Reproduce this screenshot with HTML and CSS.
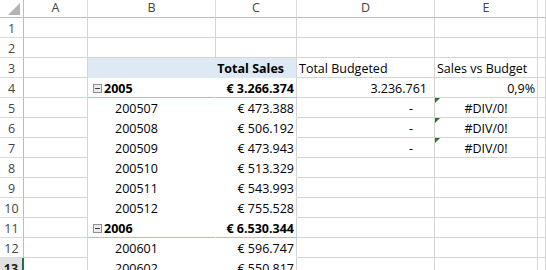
FILE: index.html
```html
<!DOCTYPE html>
<html>
<head>
<meta charset="utf-8">
<link rel="stylesheet" href="styles.css">
</head>
<body>
<div class="sheet">
  <!-- header row -->
  <div class="corner"><div class="tri"></div></div>
  <div class="ch">A</div>
  <div class="ch">B</div>
  <div class="ch">C</div>
  <div class="ch">D</div>
  <div class="ch">E</div>
  <div class="ch last"></div>

  <!-- row 1 -->
  <div class="rh">1</div><div class="c"></div><div class="c"></div><div class="c"></div><div class="c"></div><div class="c"></div><div class="c"></div>
  <!-- row 2 -->
  <div class="rh">2</div><div class="c"></div><div class="c"></div><div class="c"></div><div class="c"></div><div class="c"></div><div class="c"></div>
  <!-- row 3 -->
  <div class="rh">3</div><div class="c"></div>
  <div class="c pb phead"></div>
  <div class="c pc phead bold r hdr">Total Sales</div>
  <div class="c l">Total Budgeted</div>
  <div class="c l">Sales vs Budget</div>
  <div class="c"></div>
  <!-- row 4 -->
  <div class="rh">4</div><div class="c"></div>
  <div class="c pb year bold"><svg class="minus" width="9" height="9" viewBox="0 0 9 9"><rect x="0.5" y="0.5" width="8" height="8" fill="#ececec" stroke="#8e8e8e"/><line x1="2" y1="4.5" x2="7" y2="4.5" stroke="#3c3c3c"/></svg>2005</div>
  <div class="c pc year bold r">€ 3.266.374</div>
  <div class="c r num">3.236.761</div>
  <div class="c r">0,9%</div>
  <div class="c"></div>
  <!-- row 5 -->
  <div class="rh">5</div><div class="c"></div>
  <div class="c pb m">200507</div>
  <div class="c pc r">€ 473.388</div>
  <div class="c r dash">-</div>
  <div class="c ctr err"><span class="flag"></span>#DIV/0!</div>
  <div class="c"></div>
  <!-- row 6 -->
  <div class="rh">6</div><div class="c"></div>
  <div class="c pb m">200508</div>
  <div class="c pc r">€ 506.192</div>
  <div class="c r dash">-</div>
  <div class="c ctr err"><span class="flag"></span>#DIV/0!</div>
  <div class="c"></div>
  <!-- row 7 -->
  <div class="rh">7</div><div class="c"></div>
  <div class="c pb m">200509</div>
  <div class="c pc r">€ 473.943</div>
  <div class="c r dash">-</div>
  <div class="c ctr err"><span class="flag"></span>#DIV/0!</div>
  <div class="c"></div>
  <!-- row 8 -->
  <div class="rh">8</div><div class="c"></div>
  <div class="c pb m">200510</div>
  <div class="c pc r">€ 513.329</div>
  <div class="c"></div><div class="c"></div><div class="c"></div>
  <!-- row 9 -->
  <div class="rh">9</div><div class="c"></div>
  <div class="c pb m">200511</div>
  <div class="c pc r">€ 543.993</div>
  <div class="c"></div><div class="c"></div><div class="c"></div>
  <!-- row 10 -->
  <div class="rh">10</div><div class="c"></div>
  <div class="c pb m">200512</div>
  <div class="c pc r">€ 755.528</div>
  <div class="c"></div><div class="c"></div><div class="c"></div>
  <!-- row 11 -->
  <div class="rh">11</div><div class="c"></div>
  <div class="c pb year bold"><svg class="minus" width="9" height="9" viewBox="0 0 9 9"><rect x="0.5" y="0.5" width="8" height="8" fill="#ececec" stroke="#8e8e8e"/><line x1="2" y1="4.5" x2="7" y2="4.5" stroke="#3c3c3c"/></svg>2006</div>
  <div class="c pc year bold r">€ 6.530.344</div>
  <div class="c"></div><div class="c"></div><div class="c"></div>
  <!-- row 12 -->
  <div class="rh">12</div><div class="c"></div>
  <div class="c pb m">200601</div>
  <div class="c pc r">€ 596.747</div>
  <div class="c"></div><div class="c"></div><div class="c"></div>
  <!-- row 13 -->
  <div class="rh sel">13</div><div class="c"></div>
  <div class="c pb m">200602</div>
  <div class="c pc r">€ 550.817</div>
  <div class="c"></div><div class="c"></div><div class="c"></div>
</div>
</body>
</html>
```

FILE: styles.css
```css
html, body {
  margin: 0;
  padding: 0;
  background: #ffffff;
  overflow: hidden;
}

.sheet {
  display: grid;
  grid-template-columns: 24px 64px 128px 81px 138px 103px 8px;
  grid-template-rows: 18px repeat(13, 20px);
  width: 546px;
  height: 270px;
  overflow: hidden;
  font-family: "Open Sans", "Liberation Sans", sans-serif;
  font-size: 12.5px;
  color: #000;
}

.sheet > div {
  box-sizing: border-box;
  border-right: 1px solid #d4d4d4;
  border-bottom: 1px solid #d4d4d4;
  white-space: nowrap;
  overflow: hidden;
}

/* column headers */
.corner {
  display: flex;
  justify-content: flex-end;
  align-items: flex-end;
  padding: 0 3px 2px 0;
  border-right-color: #bdbdbd !important;
  border-bottom-color: #bdbdbd !important;
}
.tri {
  width: 0;
  height: 0;
  border-left: 12px solid transparent;
  border-bottom: 12px solid #b4b4b4;
}
.ch {
  text-align: center;
  color: #444;
  line-height: 16px;
  border-right-color: #dadada !important;
  border-bottom-color: #bdbdbd !important;
}

/* row headers */
.rh {
  text-align: center;
  color: #444;
  line-height: 17px;
  padding-top: 2px;
  border-right-color: #bdbdbd !important;
  border-bottom-color: #dadada !important;
}
.rh.sel {
  background: #e1e1e1;
  color: #222;
  font-weight: 700;
  border-right: 2px solid #217346 !important;
}

/* cells */
.c {
  line-height: 17px;
  padding-top: 2px;
}
.r { text-align: right; padding-right: 2px; }
.l { text-align: left; padding-left: 2px; }
.ctr { text-align: center; }
.bold { font-weight: 700; }

.num { padding-right: 7px; }
.dash { padding-right: 21px; }
.hdr { padding-right: 12px; }

.err { position: relative; }
.flag {
  position: absolute;
  left: 0;
  top: 0;
  width: 0;
  height: 0;
  border-top: 5px solid #1e7b1e;
  border-right: 5px solid transparent;
}

/* pivot area: no gridlines inside */
.pb {
  border-right-color: #ffffff !important;
  border-bottom-color: #ffffff !important;
}
.pc {
  border-bottom-color: #ffffff !important;
}
.phead {
  background: #dde9f5;
  border-bottom-color: #dde9f5 !important;
}
.pb.phead {
  border-right-color: #dde9f5 !important;
}
.year {
  border-bottom-color: #9dc3e6 !important;
}

.pb.year {
  display: flex;
  align-items: flex-start;
  padding-left: 5px;
}
.minus {
  flex: none;
  margin: 4px 2px 0 0;
}
.pb.m {
  padding-left: 27px;
}
```
